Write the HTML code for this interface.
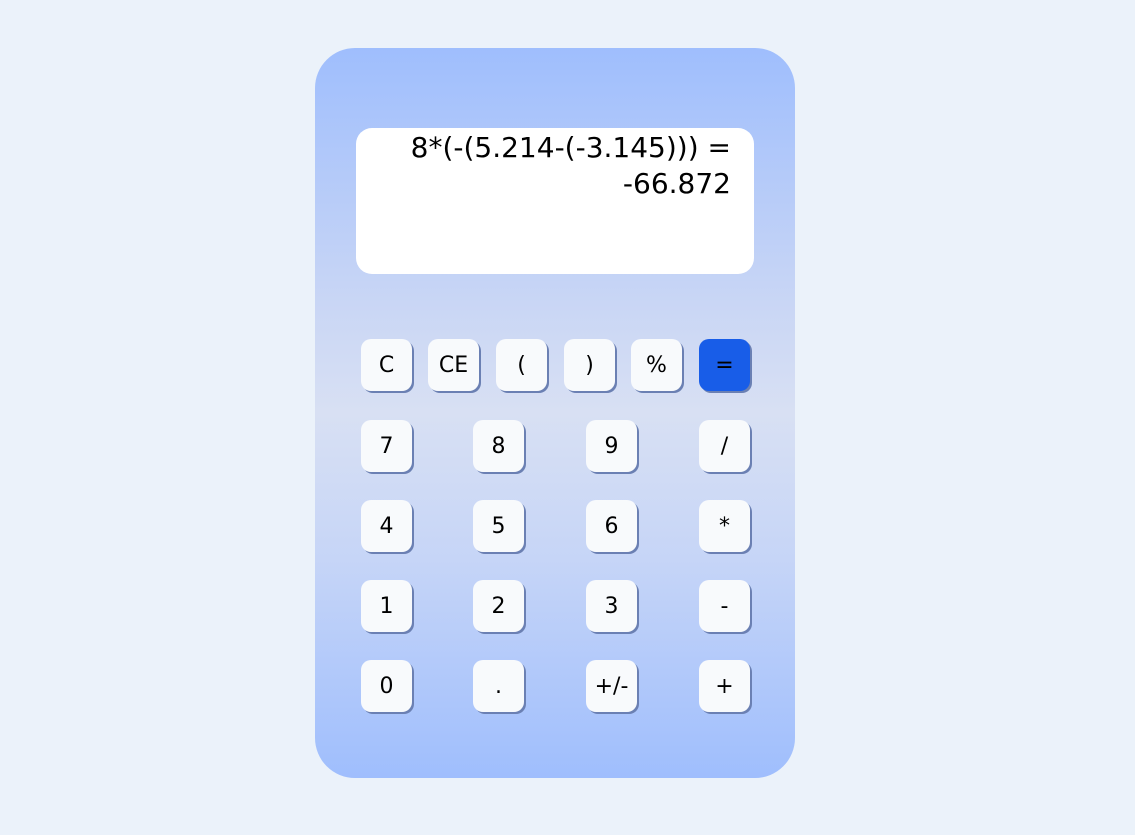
<!DOCTYPE html>
<html><head><style>
body{margin:0;width:1135px;height:835px;background:#ebf2fa;position:relative;font-family:"DejaVu Sans","Liberation Sans",sans-serif;overflow:hidden}
.calc{position:absolute;left:315px;top:48px;width:480px;height:730px;border-radius:40px;background:linear-gradient(#9fbefd 0%,#c9d6f5 35%,#d8e0f3 50%,#c6d5f7 70%,#9fbefd 100%)}
.disp{position:absolute;left:41px;top:80px;width:398px;height:146px;background:#fff;border-radius:16px;box-sizing:border-box;padding:2px 23px 0 0;text-align:right;font-size:28px;line-height:36px;color:#000}
.b{position:absolute;width:51px;height:52px;border-radius:10px;background:#f8fafc;box-shadow:2px 2px 0 #6b80b3;display:flex;align-items:center;justify-content:center;font-size:22px;color:#000}
.eq{background:#185de8}
</style></head><body>
<div class="calc">
<div class="disp">8*(-(5.214-(-3.145))) =<br>-66.872</div>
<div class="b" style="left:46px;top:291px">C</div>
<div class="b" style="left:113px;top:291px">CE</div>
<div class="b" style="left:181px;top:291px">(</div>
<div class="b" style="left:249px;top:291px">)</div>
<div class="b" style="left:316px;top:291px">%</div>
<div class="b eq" style="left:384px;top:291px">=</div>
<div class="b" style="left:46px;top:372px">7</div>
<div class="b" style="left:158px;top:372px">8</div>
<div class="b" style="left:271px;top:372px">9</div>
<div class="b" style="left:384px;top:372px">/</div>
<div class="b" style="left:46px;top:452px">4</div>
<div class="b" style="left:158px;top:452px">5</div>
<div class="b" style="left:271px;top:452px">6</div>
<div class="b" style="left:384px;top:452px">*</div>
<div class="b" style="left:46px;top:532px">1</div>
<div class="b" style="left:158px;top:532px">2</div>
<div class="b" style="left:271px;top:532px">3</div>
<div class="b" style="left:384px;top:532px">-</div>
<div class="b" style="left:46px;top:612px">0</div>
<div class="b" style="left:158px;top:612px">.</div>
<div class="b" style="left:271px;top:612px">+/-</div>
<div class="b" style="left:384px;top:612px">+</div>
</div>
</body></html>
